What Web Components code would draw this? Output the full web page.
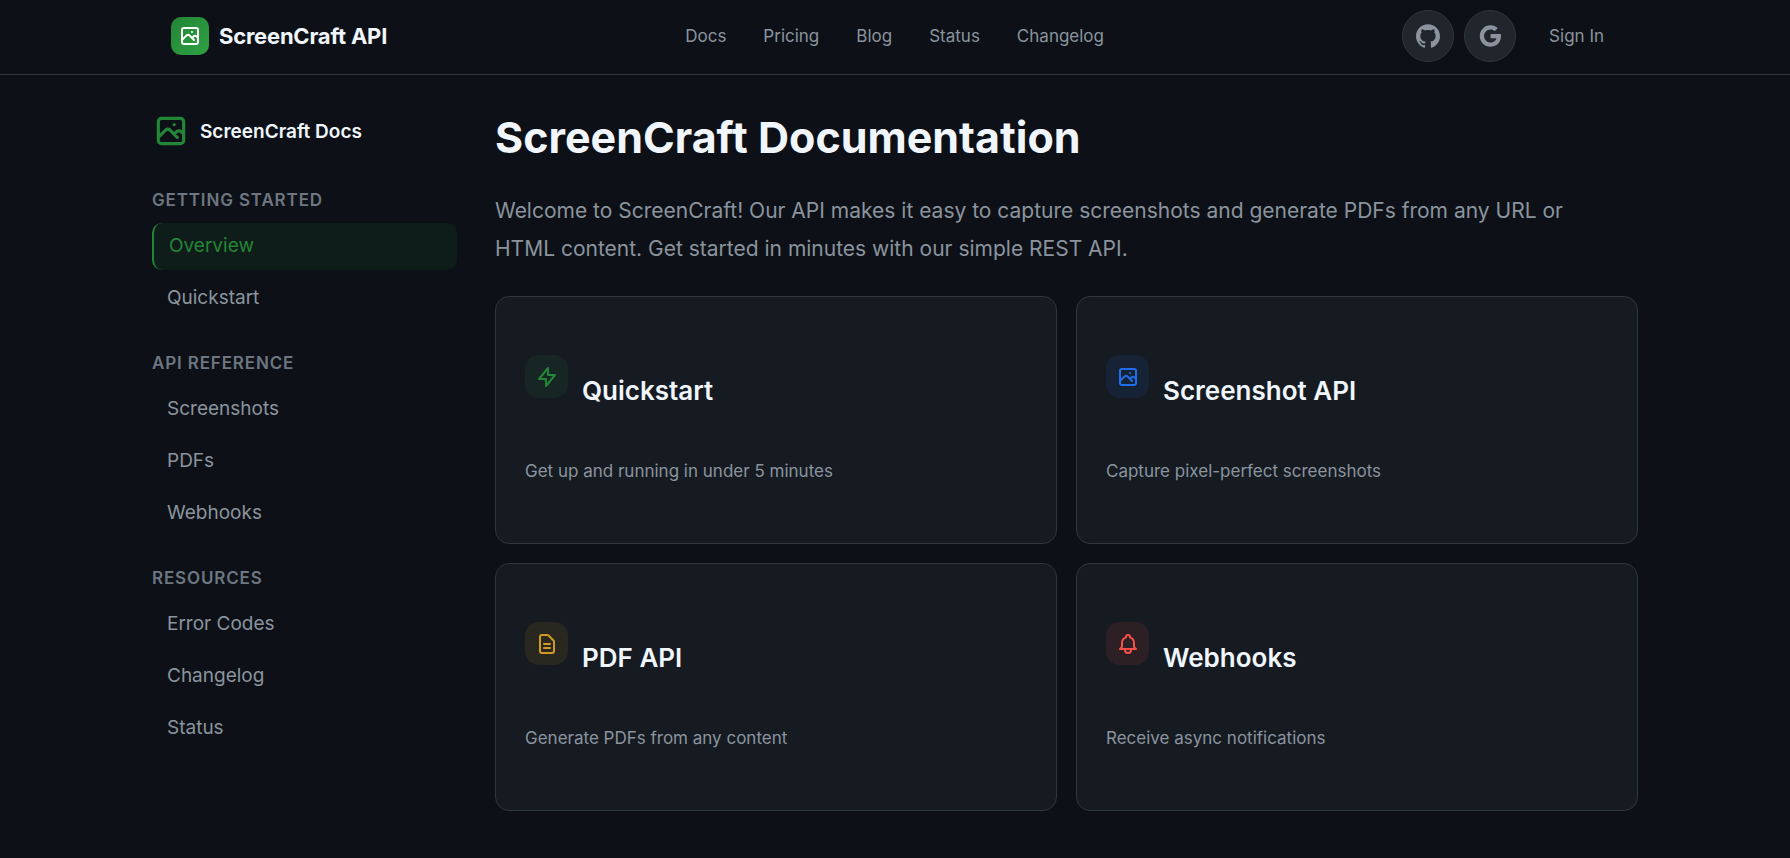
<!DOCTYPE html>
<html lang="en">
<head>
<meta charset="UTF-8">
<meta name="viewport" content="width=device-width, initial-scale=1.0">
<title>ScreenCraft Documentation</title>
<style>
  :root {
    --sc-bg: #0d1117;
    --sc-card: #161b22;
    --sc-raised: #21262d;
    --sc-border: #30363d;
    --sc-fg: #f0f6fc;
    --sc-muted: #8b949e;
    --sc-subtle: #6e7681;
    --sc-green: #238636;
    --sc-blue: #1f6feb;
    --sc-amber: #d29922;
    --sc-red: #f85149;
  }
  body {
    margin: 0;
    min-height: 100vh;
    background: var(--sc-bg);
    color: var(--sc-fg);
    font-family: Inter, "Liberation Sans", sans-serif;
    font-size: 17px;
  }
</style>
</head>
<body>
<sc-header>
  <sc-nav-link href="#docs">Docs</sc-nav-link>
  <sc-nav-link href="#pricing">Pricing</sc-nav-link>
  <sc-nav-link href="#blog">Blog</sc-nav-link>
  <sc-nav-link href="#status">Status</sc-nav-link>
  <sc-nav-link href="#changelog">Changelog</sc-nav-link>
</sc-header>

<sc-layout>
  <sc-sidebar slot="sidebar">
    <sc-section label="Getting Started">
      <sc-side-link href="#overview" active>Overview</sc-side-link>
      <sc-side-link href="#quickstart">Quickstart</sc-side-link>
    </sc-section>
    <sc-section label="API Reference">
      <sc-side-link href="#screenshots">Screenshots</sc-side-link>
      <sc-side-link href="#pdfs">PDFs</sc-side-link>
      <sc-side-link href="#webhooks">Webhooks</sc-side-link>
    </sc-section>
    <sc-section label="Resources">
      <sc-side-link href="#errors">Error Codes</sc-side-link>
      <sc-side-link href="#changelog">Changelog</sc-side-link>
      <sc-side-link href="#status">Status</sc-side-link>
    </sc-section>
  </sc-sidebar>

  <sc-intro heading="ScreenCraft Documentation">Welcome to ScreenCraft! Our API makes it easy to capture screenshots and generate PDFs from any URL or HTML content. Get started in minutes with our simple REST API.</sc-intro>
  <sc-card-grid>
    <sc-card href="#quickstart" icon="bolt" tone="green" heading="Quickstart">Get up and running in under 5 minutes</sc-card>
    <sc-card href="#screenshots" icon="image" tone="blue" heading="Screenshot API">Capture pixel-perfect screenshots</sc-card>
    <sc-card href="#pdfs" icon="document" tone="amber" heading="PDF API">Generate PDFs from any content</sc-card>
    <sc-card href="#webhooks" icon="bell" tone="red" heading="Webhooks">Receive async notifications</sc-card>
  </sc-card-grid>
</sc-layout>

<script>
const STROKE_ICONS = {
  image: 'M4 16l4.586-4.586a2 2 0 012.828 0L16 16m-2-2l1.586-1.586a2 2 0 012.828 0L20 14m-6-6h.01M6 20h12a2 2 0 002-2V6a2 2 0 00-2-2H6a2 2 0 00-2 2v12a2 2 0 002 2z',
  bolt: 'M13 10V3L4 14h7v7l9-11h-7z',
  document: 'M9 12h6m-6 4h6m2 5H7a2 2 0 01-2-2V5a2 2 0 012-2h5.586a1 1 0 01.707.293l5.414 5.414a1 1 0 01.293.707V19a2 2 0 01-2 2z',
  bell: 'M15 17h5l-1.405-1.405A2.032 2.032 0 0118 14.158V11a6.002 6.002 0 00-4-5.659V5a2 2 0 10-4 0v.341C7.67 6.165 6 8.388 6 11v3.159c0 .538-.214 1.055-.595 1.436L4 17h5m6 0v1a3 3 0 11-6 0v-1m6 0H9',
};

const FILL_ICONS = {
  github: 'M12 .297c-6.63 0-12 5.373-12 12 0 5.303 3.438 9.8 8.205 11.385.6.113.82-.258.82-.577 0-.285-.01-1.04-.015-2.04-3.338.724-4.042-1.61-4.042-1.61C4.422 18.07 3.633 17.7 3.633 17.7c-1.087-.744.084-.729.084-.729 1.205.084 1.838 1.236 1.838 1.236 1.07 1.835 2.809 1.305 3.495.998.108-.776.417-1.305.76-1.605-2.665-.3-5.466-1.332-5.466-5.93 0-1.31.465-2.38 1.235-3.22-.135-.303-.54-1.523.105-3.176 0 0 1.005-.322 3.3 1.23.96-.267 1.98-.399 3-.405 1.02.006 2.04.138 3 .405 2.28-1.552 3.285-1.23 3.285-1.23.645 1.653.24 2.873.12 3.176.765.84 1.23 1.91 1.23 3.22 0 4.61-2.805 5.625-5.475 5.92.42.36.81 1.096.81 2.22 0 1.606-.015 2.896-.015 3.286 0 .315.21.69.825.57C20.565 22.092 24 17.592 24 12.297c0-6.627-5.373-12-12-12',
  google: 'M12.545 10.239v3.821h5.445c-.712 2.315-2.647 3.972-5.445 3.972-3.332 0-6.033-2.701-6.033-6.032s2.701-6.032 6.033-6.032c1.498 0 2.866.549 3.921 1.453l2.814-2.814C17.503 2.988 15.139 2 12.545 2 7.021 2 2.543 6.477 2.543 12s4.478 10 10.002 10c8.396 0 10.249-7.85 9.426-11.748z',
};

class ScElement extends HTMLElement {
  constructor() {
    super();
    this.attachShadow({ mode: 'open' });
  }

  connectedCallback() {
    this.render();
  }

  attr(name) {
    return this.getAttribute(name) || '';
  }
}

class ScIcon extends ScElement {
  render() {
    const name = this.attr('name');
    const filled = name in FILL_ICONS;
    this.shadowRoot.innerHTML = `
      <style>
        :host {
          display: block;
          flex: none;
          width: 24px;
          height: 24px;
        }
        svg {
          display: block;
          width: 100%;
          height: 100%;
        }
      </style>
      <svg viewBox="0 0 24 24" aria-hidden="true"
        fill="${filled ? 'currentColor' : 'none'}"
        stroke="${filled ? 'none' : 'currentColor'}"
        stroke-width="2" stroke-linecap="round" stroke-linejoin="round">
        <path d="${filled ? FILL_ICONS[name] : STROKE_ICONS[name]}"/>
      </svg>
    `;
  }
}

class ScNavLink extends ScElement {
  render() {
    this.shadowRoot.innerHTML = `
      <style>
        :host {
          display: block;
        }
        a {
          color: var(--sc-muted);
          text-decoration: none;
        }
        a:hover {
          color: var(--sc-fg);
        }
      </style>
      <a href="${this.attr('href')}"><slot></slot></a>
    `;
  }
}

class ScHeader extends ScElement {
  render() {
    this.shadowRoot.innerHTML = `
      <style>
        :host {
          display: block;
          border-bottom: 1px solid var(--sc-border);
        }
        .bar {
          display: flex;
          align-items: center;
          justify-content: space-between;
          box-sizing: border-box;
          max-width: 1486px;
          margin: 0 auto;
          padding: 10px 19px 12px;
        }
        .brand {
          display: flex;
          align-items: center;
          gap: 10px;
          color: var(--sc-fg);
          font-size: 22px;
          font-weight: 700;
          letter-spacing: -0.01em;
          text-decoration: none;
        }
        .mark {
          display: grid;
          place-items: center;
          width: 38px;
          height: 38px;
          border-radius: 10px;
          background: linear-gradient(135deg, #238636, #2ea043);
          color: #fff;
        }
        nav {
          display: flex;
          gap: 37px;
        }
        .actions {
          display: flex;
          align-items: center;
          gap: 10px;
        }
        button {
          display: grid;
          place-items: center;
          width: 52px;
          height: 52px;
          padding: 0;
          border: 1px solid var(--sc-border);
          border-radius: 50%;
          background: var(--sc-raised);
          color: var(--sc-muted);
          cursor: pointer;
        }
        .signin {
          padding: 10px 15px 10px 23px;
          color: var(--sc-muted);
          text-decoration: none;
        }
        .google {
          width: 26px;
          height: 26px;
        }
      </style>
      <header class="bar">
        <a class="brand" href="#home">
          <span class="mark"><sc-icon name="image"></sc-icon></span>
          ScreenCraft API
        </a>
        <nav><slot></slot></nav>
        <div class="actions">
          <button type="button" aria-label="Sign in with GitHub"><sc-icon name="github"></sc-icon></button>
          <button type="button" aria-label="Sign in with Google"><sc-icon class="google" name="google"></sc-icon></button>
          <a class="signin" href="#signin">Sign In</a>
        </div>
      </header>
    `;
  }
}

class ScLayout extends ScElement {
  render() {
    this.shadowRoot.innerHTML = `
      <style>
        :host {
          display: grid;
          grid-template-columns: 305px minmax(0, 1fr);
          gap: 38px;
          box-sizing: border-box;
          max-width: 1486px;
          margin: 0 auto;
          padding: 37px 0;
        }
        @media (max-width: 900px) {
          :host {
            grid-template-columns: minmax(0, 1fr);
            padding: 37px 19px;
          }
        }
      </style>
      <slot name="sidebar"></slot>
      <main><slot></slot></main>
    `;
  }
}

class ScSidebar extends ScElement {
  render() {
    this.shadowRoot.innerHTML = `
      <style>
        :host {
          display: block;
        }
        .title {
          display: flex;
          align-items: center;
          gap: 10px;
          margin-bottom: 40px;
          color: var(--sc-fg);
          font-size: 19px;
          font-weight: 600;
          text-decoration: none;
        }
        sc-icon {
          width: 38px;
          height: 38px;
          color: var(--sc-green);
        }
        nav {
          display: grid;
          gap: 31px;
        }
      </style>
      <a class="title" href="#docs"><sc-icon name="image"></sc-icon>ScreenCraft Docs</a>
      <nav aria-label="Documentation"><slot></slot></nav>
    `;
  }
}

class ScSection extends ScElement {
  render() {
    this.shadowRoot.innerHTML = `
      <style>
        :host {
          display: grid;
          gap: 5px;
        }
        h2 {
          margin: 0 0 8px;
          color: var(--sc-subtle);
          font-size: 17px;
          font-weight: 600;
          line-height: 20px;
          letter-spacing: 0.05em;
          text-transform: uppercase;
        }
      </style>
      <h2>${this.attr('label')}</h2>
      <slot></slot>
    `;
  }
}

class ScSideLink extends ScElement {
  render() {
    this.shadowRoot.innerHTML = `
      <style>
        :host {
          display: block;
        }
        a {
          display: block;
          padding: 9px 15px 11px;
          border-radius: 10px;
          color: var(--sc-muted);
          font-size: 19px;
          line-height: 27px;
          text-decoration: none;
        }
        :host([active]) a {
          border-left: 2px solid var(--sc-green);
          background: rgba(35, 134, 54, 0.1);
          color: var(--sc-green);
        }
      </style>
      <a href="${this.attr('href')}"><slot></slot></a>
    `;
  }
}

class ScIntro extends ScElement {
  render() {
    this.shadowRoot.innerHTML = `
      <style>
        :host {
          display: block;
          max-width: 1120px;
        }
        h1 {
          margin: 0 0 30px;
          font-size: 43px;
          font-weight: 700;
          line-height: 50px;
        }
        p {
          margin: 0 0 28px;
          color: var(--sc-muted);
          font-size: 21px;
          line-height: 38px;
        }
      </style>
      <h1>${this.attr('heading')}</h1>
      <p><slot></slot></p>
    `;
  }
}

class ScCardGrid extends ScElement {
  render() {
    this.shadowRoot.innerHTML = `
      <style>
        :host {
          display: grid;
          grid-template-columns: repeat(2, minmax(0, 1fr));
          gap: 19px;
        }
        @media (max-width: 700px) {
          :host {
            grid-template-columns: minmax(0, 1fr);
          }
        }
      </style>
      <slot></slot>
    `;
  }
}

class ScCard extends ScElement {
  render() {
    const tone = this.attr('tone');
    this.shadowRoot.innerHTML = `
      <style>
        :host {
          display: block;
        }
        a {
          display: block;
          padding: 58px 29px 54px;
          border: 1px solid var(--sc-border);
          border-radius: 14px;
          background: var(--sc-card);
          color: var(--sc-fg);
          text-decoration: none;
        }
        a:hover {
          border-color: var(--sc-${tone});
        }
        .head {
          display: flex;
          align-items: flex-start;
          gap: 14px;
          margin-bottom: 46px;
        }
        .badge {
          display: grid;
          place-items: center;
          width: 43px;
          height: 43px;
          border-radius: 14px;
          background: color-mix(in srgb, var(--sc-${tone}) 10%, transparent);
          color: var(--sc-${tone});
        }
        h3 {
          margin: 20px 0 0;
          font-size: 26px;
          font-weight: 600;
          line-height: 32px;
        }
        p {
          margin: 0;
          color: var(--sc-muted);
          line-height: 36px;
        }
      </style>
      <a href="${this.attr('href')}">
        <div class="head">
          <span class="badge"><sc-icon name="${this.attr('icon')}"></sc-icon></span>
          <h3>${this.attr('heading')}</h3>
        </div>
        <p><slot></slot></p>
      </a>
    `;
  }
}

customElements.define('sc-icon', ScIcon);
customElements.define('sc-nav-link', ScNavLink);
customElements.define('sc-header', ScHeader);
customElements.define('sc-layout', ScLayout);
customElements.define('sc-sidebar', ScSidebar);
customElements.define('sc-section', ScSection);
customElements.define('sc-side-link', ScSideLink);
customElements.define('sc-intro', ScIntro);
customElements.define('sc-card-grid', ScCardGrid);
customElements.define('sc-card', ScCard);
</script>
</body>
</html>
